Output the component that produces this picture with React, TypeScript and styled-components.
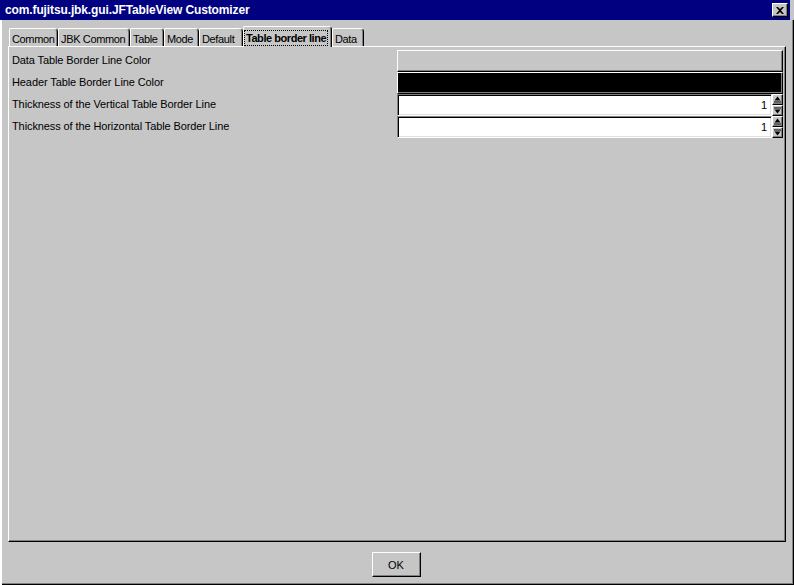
import React from 'react';
import styled, { createGlobalStyle } from 'styled-components';

const GRAY = '#c6c6c6';
const DARK = '#808080';

const Global = createGlobalStyle`
  html, body { margin: 0; padding: 0; background: ${GRAY}; }
  body { width: 794px; height: 585px; overflow: hidden; }
`;

const Window = styled.div`
  width: 794px;
  height: 585px;
  box-sizing: border-box;
  background: ${GRAY};
  display: flex;
  flex-direction: column;
  font-family: "Liberation Sans", Arial, sans-serif;
  font-size: 11px;
  color: #000;
`;

const TitleBar = styled.div`
  height: 20px;
  flex: none;
  margin-right: 4px;
  background: #000080;
  color: #fff;
  display: flex;
  align-items: center;
  justify-content: space-between;
  padding: 0 2px 0 5px;
  box-sizing: border-box;
  font-weight: bold;
  font-size: 12px;
  letter-spacing: -0.12px;
`;

const CloseButton = styled.div`
  width: 16px;
  height: 14px;
  box-sizing: border-box;
  background: ${GRAY};
  border-top: 1px solid #fff;
  border-left: 1px solid #fff;
  border-right: 1px solid #000;
  border-bottom: 1px solid #000;
  box-shadow: inset -1px -1px 0 ${DARK};
  display: flex;
  align-items: center;
  justify-content: center;
`;

const Body = styled.div`
  flex: 1;
  display: flex;
  flex-direction: column;
  padding: 6px 8px 0 8px;
  box-shadow: inset 2px 0 0 #fff, inset -1px -1px 0 #000, inset -2px -2px 0 ${DARK};
`;

const TabStrip = styled.div`
  height: 20px;
  display: flex;
  align-items: flex-end;
  padding-left: 1px;
`;

const Tab = styled.div<{ $w: number; $selected?: boolean }>`
  width: ${(p) => p.$w}px;
  height: ${(p) => (p.$selected ? 21 : 18)}px;
  margin-bottom: ${(p) => (p.$selected ? -1 : 0)}px;
  position: relative;
  z-index: ${(p) => (p.$selected ? 2 : 0)};
  box-sizing: border-box;
  background: ${GRAY};
  border-top: 1px solid #fff;
  border-left: 1px solid #fff;
  border-right: 1px solid #000;
  border-top-left-radius: 2px;
  border-top-right-radius: 4px;
  box-shadow: inset -1px 0 0 ${DARK};
  display: flex;
  align-items: center;
  padding: ${(p) => (p.$selected ? '2px 0 1px 1px' : '2px 0 0 2px')};
  font-weight: ${(p) => (p.$selected ? 'bold' : 'normal')};
  white-space: nowrap;
  letter-spacing: ${(p) => (p.$selected ? '-0.45px' : '-0.35px')};
`;

const FocusLabel = styled.span`
  outline: 1px dotted #000;
  padding: 1px;
  line-height: 12px;
`;

const Panel = styled.div`
  height: 496px;
  box-sizing: border-box;
  border-top: 1px solid #fff;
  border-left: 1px solid #fff;
  border-right: 1px solid #000;
  border-bottom: 1px solid #000;
  box-shadow: inset -1px -1px 0 ${DARK};
  padding: 3px 2px 0 3px;
  position: relative;
  z-index: 1;
`;

const PropGrid = styled.div`
  display: grid;
  grid-template-columns: 385px 1fr;
  grid-auto-rows: 22px;
`;

const Label = styled.div`
  display: flex;
  align-items: center;
  padding-bottom: 2px;
  white-space: nowrap;
  letter-spacing: -0.1px;
`;

const ColorButton = styled.div<{ $color: string }>`
  box-sizing: border-box;
  height: 22px;
  background: ${(p) => p.$color};
  border-top: 1px solid #fff;
  border-left: 1px solid #fff;
  border-right: 1px solid #000;
  border-bottom: 1px solid #000;
  box-shadow: inset -1px -1px 0 ${DARK};
`;

const Spinner = styled.div`
  display: flex;
  height: 22px;
`;

const Field = styled.div`
  flex: 1;
  box-sizing: border-box;
  background: #fff;
  border-top: 1px solid ${DARK};
  border-left: 1px solid ${DARK};
  border-right: 1px solid #fff;
  border-bottom: 1px solid #fff;
  box-shadow: inset 1px 1px 0 #000, inset -1px -1px 0 #dfdfdf;
  display: flex;
  align-items: center;
  justify-content: flex-end;
  padding-right: 4px;
`;

const SpinButtons = styled.div`
  width: 11px;
  display: flex;
  flex-direction: column;
`;

const SpinButton = styled.div`
  flex: 1;
  box-sizing: border-box;
  background: ${GRAY};
  border-top: 1px solid #fff;
  border-left: 1px solid #fff;
  border-right: 1px solid #000;
  border-bottom: 1px solid #000;
  box-shadow: inset -1px -1px 0 ${DARK};
  display: flex;
  align-items: center;
  justify-content: center;
`;

const Footer = styled.div`
  flex: 1;
  display: flex;
  justify-content: center;
  padding-top: 10px;
  padding-right: 2px;
`;

const OkButton = styled.div`
  width: 49px;
  height: 25px;
  box-sizing: border-box;
  background: ${GRAY};
  border-top: 1px solid #fff;
  border-left: 1px solid #fff;
  border-right: 1px solid #000;
  border-bottom: 1px solid #000;
  box-shadow: inset -1px -1px 0 ${DARK};
  display: flex;
  align-items: center;
  justify-content: center;
`;

const UpArrow = () => (
  <svg width="7" height="7" viewBox="0 0 7 7">
    <path d="M3.5 0.5 L6.5 4.5 L0.5 4.5 Z" fill="#000" />
    <rect x="0" y="5.5" width="7" height="1" fill="#000" />
  </svg>
);

const DownArrow = () => (
  <svg width="7" height="7" viewBox="0 0 7 7">
    <rect x="0" y="0.5" width="7" height="1" fill="#000" />
    <path d="M0.5 2.5 L6.5 2.5 L3.5 6.5 Z" fill="#000" />
  </svg>
);

const tabs = [
  { label: 'Common', w: 49 },
  { label: 'JBK Common', w: 72 },
  { label: 'Table', w: 34 },
  { label: 'Mode', w: 35 },
  { label: 'Default', w: 44 },
  { label: 'Table border line', w: 89, selected: true },
  { label: 'Data', w: 32 },
];

const SpinField = ({ value }: { value: string }) => (
  <Spinner>
    <Field>{value}</Field>
    <SpinButtons>
      <SpinButton><UpArrow /></SpinButton>
      <SpinButton><DownArrow /></SpinButton>
    </SpinButtons>
  </Spinner>
);

export default function App() {
  return (
    <>
      <Global />
      <Window>
        <TitleBar>
          <span>com.fujitsu.jbk.gui.JFTableView Customizer</span>
          <CloseButton>
            <svg width="8" height="7" viewBox="0 0 8 7">
              <path d="M0 0 L2 0 L4 2 L6 0 L8 0 L5 3.5 L8 7 L6 7 L4 5 L2 7 L0 7 L3 3.5 Z" fill="#000" />
            </svg>
          </CloseButton>
        </TitleBar>
        <Body>
          <TabStrip>
            {tabs.map((t) => (
              <Tab key={t.label} $w={t.w} $selected={t.selected}>
                {t.selected ? <FocusLabel>{t.label}</FocusLabel> : t.label}
              </Tab>
            ))}
          </TabStrip>
          <Panel>
            <PropGrid>
              <Label>Data Table Border Line Color</Label>
              <ColorButton $color={GRAY} />
              <Label>Header Table Border Line Color</Label>
              <ColorButton $color="#000" />
              <Label>Thickness of the Vertical Table Border Line</Label>
              <SpinField value="1" />
              <Label>Thickness of the Horizontal Table Border Line</Label>
              <SpinField value="1" />
            </PropGrid>
          </Panel>
          <Footer>
            <OkButton>OK</OkButton>
          </Footer>
        </Body>
      </Window>
    </>
  );
}
